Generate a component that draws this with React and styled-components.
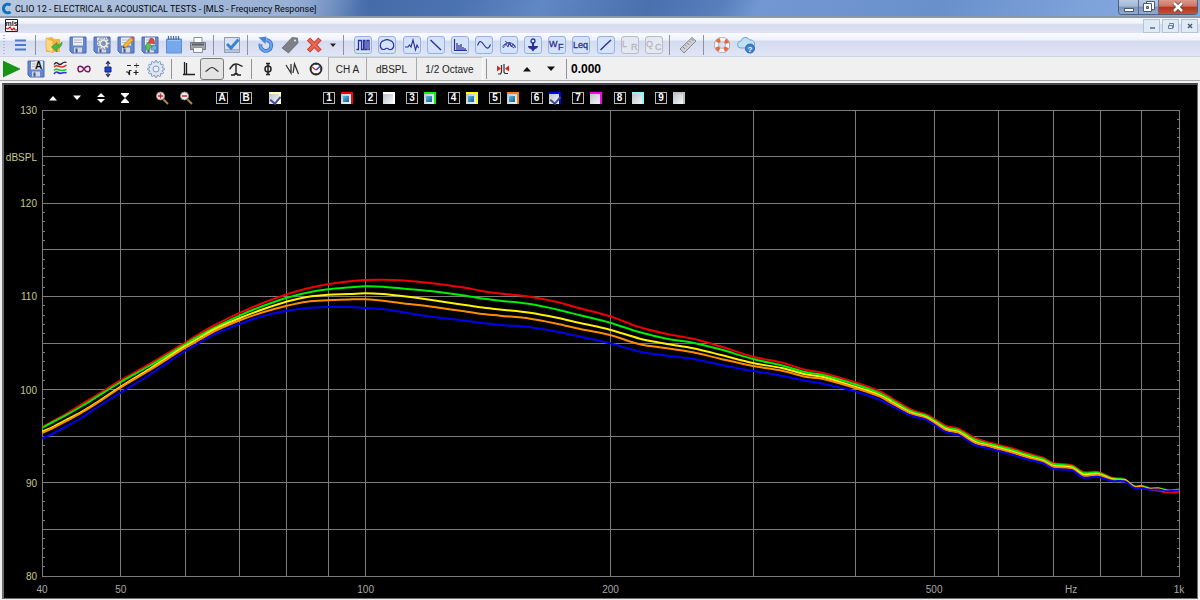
import React, { useLayoutEffect, useRef, useState } from 'react';
import styled, { createGlobalStyle, css } from 'styled-components';

const GlobalStyle = createGlobalStyle`
  * { box-sizing: border-box; }
  body { margin: 0; background: #f0f0f0; font-family: "Liberation Sans", Arial, sans-serif; font-size: 10px; }
  button, input { font: inherit; color: inherit; margin: 0; padding: 0; }
`;

const Window = styled.div`
  display: flex;
  flex-direction: column;
  min-height: 100vh;
`;

const TitleBar = styled.header`
  display: flex;
  align-items: flex-start;
  height: 18px;
  border-bottom: 2px solid #8d98ad;
  background:
    linear-gradient(90deg, rgba(205, 217, 235, 0.75) 0, rgba(190, 206, 230, 0.6) 290px, rgba(150, 175, 212, 0) 370px),
    linear-gradient(120deg, #7292c4 0, #5f83bb 26%, #456aa8 30%, #4c73b1 38%, #6088c4 45%, #4a70ae 54%, #5880bd 60%, #7397d2 63%, #6a90cc 78%, #7ea2da 90%, #86a8de 100%);
`;

const AppLogo = styled.svg`
  flex: none;
  margin: 2px 3px 0 0;
`;

const Title = styled.h1`
  flex: 1;
  margin: 0;
  font: 400 9px/18px Roboto, "Open Sans", sans-serif;
  color: #05080f;
  white-space: nowrap;
`;

const WindowControls = styled.div`
  display: flex;
  flex: none;
  margin-right: 2px;
  height: 15px;
  border: 1px solid #4d5f80;
  border-top: 0;
  border-radius: 0 0 4px 4px;
  overflow: hidden;
`;

const WindowButton = styled.button`
  display: grid;
  place-items: center;
  width: ${(p) => (p.$close ? 38 : 20)}px;
  border: 0;
  border-right: ${(p) => (p.$close ? 0 : '1px solid #5b6d8d')};
  background: ${(p) =>
    p.$close
      ? 'linear-gradient(#d99a8c 0, #cc7464 45%, #b03420 50%, #c9503c 100%)'
      : 'linear-gradient(#b9cae3 0, #a3b7d6 45%, #7b93ba 50%, #93abcf 100%)'};
`;

const MenuBar = styled.nav`
  display: flex;
  align-items: center;
  justify-content: space-between;
  height: 15px;
  padding: 0 2px 0 5px;
  background: linear-gradient(#f8fafe 0, #eef1f9 35%, #d5dcee 45%, #dde3f2 100%);
`;

const MdiControls = styled.div`
  display: flex;
  gap: 2px;
`;

const MdiButton = styled.button`
  display: grid;
  place-items: center;
  width: 17px;
  height: 14px;
  border: 1px solid #b4c3d8;
  background: #dfeaf7;
`;

const Toolbar = styled.div`
  display: flex;
  align-items: center;
  height: 24px;
  ${(p) =>
    p.$main
      ? css`
          background: linear-gradient(#fbfcff 0, #eff2fb 30%, #d4dbef 36%, #e1e6f6 100%);
          border-bottom: 1px solid #cdd3e2;
        `
      : css`
          background: #f0f0f0;
          border-bottom: 1px solid #a6a6a6;
        `}
`;

const Grip = styled.div`
  width: 2px;
  height: 20px;
  margin: 0 3px;
  background: repeating-linear-gradient(#b4bccf 0 1px, transparent 1px 3px);
`;

const Separator = styled.div`
  flex: none;
  width: ${(p) => (p.$wide ? 10 : 8)}px;
  height: 20px;
  padding-left: 3px;
  &::before {
    content: '';
    display: block;
    width: 1px;
    height: 100%;
    background: #8f9299;
  }
`;

const ToolButton = styled.button`
  flex: none;
  display: grid;
  place-items: center;
  width: ${(p) => (p.$narrow ? 14 : 24)}px;
  height: 22px;
  border: ${(p) => (p.$pressed ? '1px solid #7a7a7a' : '0')};
  border-radius: 3px;
  background: ${(p) => (p.$pressed ? '#e4e4e4' : 'transparent')};
`;

const ModuleGroup = styled.div`
  display: flex;
  justify-content: space-between;
  width: 316px;
  padding-left: 1px;
`;

const ModuleFrame = styled.span`
  display: grid;
  place-items: center;
  width: 18px;
  height: 18px;
  border: 1px solid ${(p) => (p.$off ? '#b9bdc6' : '#93b3e4')};
  border-radius: 3px;
  background: ${(p) => (p.$off ? '#e4e8f2' : '#d6e2f7')};
`;

const TextButton = styled.button`
  flex: none;
  width: ${(p) => p.$width}px;
  height: 23px;
  border: 0;
  border-left: 1px solid #a9a9a9;
  border-top: 1px solid #c4c4c4;
  border-right: ${(p) => (p.$last ? '1px solid #fff' : '0')};
  background: #eeeeee;
  color: #222;
  white-space: nowrap;
`;

const Readout = styled.output`
  font-size: 12px;
  font-weight: 700;
  color: #000;
`;

const ChartPanel = styled.main`
  flex: 1;
  display: flex;
  flex-direction: column;
  margin: 2px 2px 1px;
  border: 2px solid #6c6f72;
  border-top-color: #45474a;
  border-right-width: 1px;
  border-bottom-width: 1px;
  background: #000;
`;

const ChartTools = styled.div`
  display: flex;
  align-items: center;
  height: 25px;
  padding-left: 37px;
`;

const ToolSet = styled.div`
  display: flex;
  align-items: center;
  margin-right: ${(p) => p.$gap}px;
`;

const Channels = styled.div`
  display: flex;
  justify-content: space-between;
  width: 362px;
`;

const Channel = styled.label`
  display: flex;
  align-items: center;
  gap: 6px;
`;

const Badge = styled.span`
  display: grid;
  place-items: center;
  width: 12px;
  height: 12px;
  border: 1px solid #b8b8b8;
  color: #fff;
  font-size: 10px;
  font-weight: 700;
  line-height: 10px;
`;

const Swatch = styled.input`
  appearance: none;
  display: block;
  width: 12px;
  height: 12px;
  border: 0 solid ${(p) => p.$color};
  border-width: 2px 2px 0 0;
  background: linear-gradient(135deg, #c0c4c9, #f5f6f7);
  &::after {
    content: '';
    display: block;
    ${(p) =>
      p.$mark === 'fill' &&
      css`
        width: 6px;
        height: 6px;
        margin: 2px;
        background: linear-gradient(135deg, #58bde8, #135c94);
      `}
    ${(p) =>
      p.$mark === 'check' &&
      css`
        width: 5px;
        height: 8px;
        margin: 0 3px;
        border: solid #3c4f96;
        border-width: 0 2px 2px 0;
        transform: rotate(40deg);
      `}
  }
`;

const ChartArea = styled.div`
  position: relative;
  flex: 1;
  min-height: 200px;
`;

const ChartSvg = styled.svg`
  position: absolute;
  inset: 0;
  width: 100%;
  height: 100%;
  overflow: visible;
  font-size: 10px;
`;

/* ---------- icons ---------- */

const Icon = ({ children, size = 18, ...rest }) => (
  <svg width={size} height={size} viewBox="0 0 18 18" fill="none" aria-hidden="true" {...rest}>
    {children}
  </svg>
);

const Floppy = ({ children }) => (
  <Icon>
    <path d="M1 1h16v16H3l-2-2z" fill="#6488cf" stroke="#4a69b0" />
    <path d="M4 1.500h10v8H4z" fill="#eceef2" />
    <path d="M5 4h8M5 6.500h8" stroke="#b5bac6" />
    <path d="M5 11.500h8v5H5z" fill="#d3d7df" />
    <path d="M6.500 12.500h2v4h-2z" fill="#3e5596" />
    {children}
  </Icon>
);

const gearPath = (cx, cy, r, R, n) => {
  const pts = [];
  for (let i = 0; i < n; i++) {
    const a = (i / n) * Math.PI * 2;
    const w = Math.PI / n;
    [[-0.7, r], [-0.42, R], [0.42, R], [0.7, r]].forEach(([k, q]) =>
      pts.push(`${cx + q * Math.cos(a + k * w)},${cy + q * Math.sin(a + k * w)}`)
    );
  }
  return `M${pts.join('L')}Z`;
};

const mainIcons = {
  menu: (
    <Icon><path d="M4 4.500h11M4 9h11M4 13.500h11" stroke="#4c78c8" strokeWidth="2" /></Icon>
  ),
  open: (
    <Icon>
      <path d="M1 2l6-1 2 2h6v13H1z" fill="#f2b63c" />
      <path d="M1 2l7 3v12l-7-3z" fill="#fcd879" stroke="#e0a135" strokeWidth=".6" />
      <path d="M17 6c0 4-2 6-5 6.500V16l-5.500-5L12 6.500V9c2 0 4-1 5-3z" fill="#4fb548" stroke="#2f8f2e" strokeWidth=".6" />
    </Icon>
  ),
  save: <Floppy />,
  saveSettings: (
    <Floppy>
      <path d={gearPath(10.500, 7.500, 4.500, 6.300, 9)} fill="#e6e8ec" stroke="#8a8e96" strokeWidth=".8" />
      <circle cx="10.500" cy="7.500" r="2" fill="#7d95c8" stroke="#8a8e96" />
    </Floppy>
  ),
  saveEdit: (
    <Floppy>
      <path d="M6 12l1-3.500L14 1.500l2.500 2.500-7 7z" fill="#f7b733" stroke="#a86f18" strokeWidth=".7" />
      <path d="M14 1.500l2.500 2.500 1-1.500L15.500.500z" fill="#d95b4d" />
      <path d="M6 12l.6-2 1.400 1.400z" fill="#333" />
    </Floppy>
  ),
  saveChart: (
    <Floppy>
      <path d="M9.500 2a4 4 0 014 4v2L7 7z" fill="#e2473d" stroke="#8d3730" strokeWidth=".5" />
      <path d="M7 6.500l4 3.500-4 5a5 5 0 010-8.500z" fill="#5fbe55" stroke="#337c31" strokeWidth=".5" />
      <path d="M12 9l4 1.500-1 4-5-1z" fill="#6fb3ee" stroke="#33669c" strokeWidth=".5" />
    </Floppy>
  ),
  notepad: (
    <Icon>
      <path d="M1.500 3h15v14h-15z" fill="#76a9ec" stroke="#5c8ed6" />
      <path d="M3 4.500h12" stroke="#9cc3f5" />
      <path d="M3.500 0v4M6 0v4M8.500 0v4M11 0v4M13.500 0v4" stroke="#4a6595" strokeWidth="1.200" />
    </Icon>
  ),
  print: (
    <Icon>
      <path d="M5 1.500h8v6H5z" fill="#fff" stroke="#8b8f96" />
      <path d="M1.500 6.500h15v7h-15z" fill="#a2a6ad" stroke="#73777e" />
      <path d="M3 8.500h12" stroke="#5c6066" strokeWidth="2" />
      <path d="M4.500 11.500h9v5h-9z" fill="#f4f5f7" stroke="#8b8f96" />
    </Icon>
  ),
  check: (
    <Icon>
      <path d="M1.500 1.500h15v15h-15z" fill="#d8e2f4" stroke="#9098a8" />
      <path d="M1.500 13.500h15v3h-15z" fill="#b9c4da" stroke="#9098a8" strokeWidth=".6" />
      <path d="M4 8l4 4 7.500-8.500" stroke="#3a83d6" strokeWidth="3" />
    </Icon>
  ),
  undo: (
    <Icon>
      <path d="M3.500 8a5.500 5.500 0 1 0 6-4" stroke="#3f76cc" strokeWidth="3.800" />
      <path d="M3.500 8a5.500 5.500 0 1 0 6-4" stroke="#6ea1ec" strokeWidth="2" />
      <path d="M1.500 1.500l8-1-1 7.500z" fill="#4a86dc" />
    </Icon>
  ),
  tag: (
    <Icon>
      <path d="M1 12L11 1.500l5.500.5.500 5L7.500 17z" fill="#7d8086" stroke="#64676d" strokeWidth=".7" />
      <circle cx="14" cy="4.500" r="1" fill="#f0f2f6" />
    </Icon>
  ),
  remove: (
    <Icon>
      <path d="M3.500 3l11.500 12M15 3L3.500 15" stroke="#c83d2b" strokeWidth="4.600" />
      <path d="M4 3.500l10.500 11M14.500 3.500L4 14.500" stroke="#ea6451" strokeWidth="2.600" />
    </Icon>
  ),
  ruler: (
    <Icon>
      <path d="M1 13L13 1.500 17 5 5 17z" fill="#cfd1d5" stroke="#85888e" />
      <path d="M4 11l2 2M6.300 9l1.500 1.500M8.300 7l2 2M10.500 5l1.500 1.500M12.500 3l2 2" stroke="#85888e" />
    </Icon>
  ),
  help: (
    <Icon>
      <circle cx="9" cy="9" r="5.500" stroke="#8f949e" strokeWidth="5" />
      <circle cx="9" cy="9" r="5.500" stroke="#f3f4f6" strokeWidth="3.800" />
      <circle cx="9" cy="9" r="5.500" stroke="#e36a3d" strokeWidth="3.800" strokeDasharray="3.600 5.040" strokeDashoffset="-2.500" />
    </Icon>
  ),
  cloud: (
    <Icon>
      <path d="M4 12a3.500 3.500 0 010-7 4.500 4.500 0 018.500-1A4 4 0 0114.500 12z" fill="#bfe0f5" stroke="#6ba5d3" />
      <circle cx="13" cy="12.500" r="4.500" fill="#3f83cf" stroke="#2b66ab" />
      <text x="13" y="15.500" textAnchor="middle" fontSize="8" fontWeight="700" fill="#fff">?</text>
    </Icon>
  ),
};

const Caret = ({ up, color = '#111' }) => (
  <svg width="10" height="6" viewBox="0 0 10 6" aria-hidden="true">
    <path d={up ? 'M1 5.500L5 1l4 4.500z' : 'M1 .5L5 5 9 .5z'} fill={color} />
  </svg>
);

const Line = ({ d, width = 1.1 }) => (
  <svg width="16" height="16" viewBox="0 0 16 16" fill="none" stroke="#2a2f9c" strokeWidth={width} aria-hidden="true">
    <path d={d} />
  </svg>
);

const Letters = ({ a, b, color }) => (
  <svg width="16" height="16" viewBox="0 0 16 16" fill={color} stroke={color} strokeWidth=".3" fontSize="9" aria-hidden="true">
    <text x="0" y="10">{a}</text>
    <text x="9" y="13">{b}</text>
  </svg>
);

const modules = [
  ['MLS', <Line d="M1.500 12.500h2v-9h3v9h2v-9h1.500v9h2v-9h2v9H15" width={1.3} />],
  ['Polar', <Line d="M5.500 12.500H3.500A5 5 0 0 1 5 3.500a6 6 0 0 1 6 0 5 5 0 0 1 1.500 9h-2.500q-2-2.500-4.500 0z" />],
  ['Scope', <Line d="M1 10h3l1.500-2 1.500 2L9 3l2.500 10 1.500-5 1.500 3" />],
  ['Waterfall', <Line d="M2.500 3l10.500 10" width={1.4} />],
  ['FFT', <Line d="M2.500 2v11.500H15M5 13V6M7 13V8M9 13V7M11 13v-3M13 13v-2" width={1.2} />],
  ['Sinusoidal', <Line d="M1.500 8.500c2-6 4-4.500 6.500-.5s4.500 4.500 6.500-.5" />],
  ['Multimeter', <Line d="M1.500 9.500c3-5 10-5 13 0M2 11l3-4 2 3 1.500-5 2 5 1.500-3 2.500 4M4 4l9 7" width={0.9} />],
  ['Linearity', (
    <svg width="16" height="16" viewBox="0 0 16 16" fill="#2a2f9c" aria-hidden="true">
      <circle cx="8" cy="4" r="2" fill="none" stroke="#2a2f9c" strokeWidth="1.300" />
      <path d="M7 6h2v3h4c0 2-2 3-3 3l-2 2.500L6 12c-1 0-3-1-3-3h4z" />
    </svg>
  )],
  ['Wow and flutter', <Letters a="W" b="F" color="#2a2f9c" />],
  ['Leq', (
    <svg width="16" height="16" viewBox="0 0 16 16" fill="#2a2f9c" stroke="#2a2f9c" strokeWidth=".3" aria-hidden="true">
      <text x="0" y="11" fontSize="9">Leq</text>
    </svg>
  )],
  ['Level', <Line d="M2.500 13L7 8.500 13 3" width={1.4} />],
  ['Loudspeaker ratio', <Letters a="L" b="R" color="#b3b7c0" />, true],
  ['Quality control', <Letters a="Q" b="C" color="#b3b7c0" />, true],
];

const mlsIcons = {
  play: (
    <Icon><path d="M0 1l17 8-17 8z" fill="#149614" stroke="#0b7d0b" strokeWidth=".6" /></Icon>
  ),
  autosave: (
    <Floppy>
      <path d="M8 1h8v8H8z" fill="#dfe3ec" />
      <text x="8" y="9" fontSize="10" fontWeight="700" fill="#111">A</text>
    </Floppy>
  ),
  overlays: (
    <Icon strokeWidth="1.300">
      <path d="M3 4.500q2-3 4-1t4 0 4.500-1" stroke="#222" />
      <path d="M3 7q2-2 4-1t4 1 4.500-2" stroke="#e03030" strokeWidth="1.600" />
      <path d="M3 10.500q2-2 4-1t4 1 4.500-1" stroke="#25c525" strokeWidth="1.600" />
      <path d="M3 14q2-3 4-1.500t4 .5 4.500 0" stroke="#2a2ae0" strokeWidth="1.600" />
    </Icon>
  ),
  loop: (
    <Icon><path d="M9 9C7 5.500 3 5 3 9s4 3.500 6 0 6-4 6 0-4 3.500-6 0z" stroke="#7a1560" strokeWidth="1.500" /></Icon>
  ),
  scale: (
    <Icon>
      <path d="M6 7h6v5H6z" fill="#1b47d8" stroke="#11207c" />
      <path d="M9 1.500v5M9 12.500v4M7 4l2-2.500L11 4M7 14l2 2.500 2-2.500" stroke="#222a60" strokeWidth="1.200" />
    </Icon>
  ),
  math: (
    <Icon><path d="M4 5.500h4M11 5.500h5M13.500 3.500v1M13.500 6.500v1M10.500 12.500h5M13 10v5M3 12h2l1.500 3V10.500h2" stroke="#222" strokeWidth="1.200" /></Icon>
  ),
  settings: (
    <Icon stroke="#7d9ac6">
      <path d={gearPath(9, 9, 6.500, 8.300, 12)} fill="#dfe7f3" />
      <circle cx="9" cy="9" r="3" fill="#f0f0f0" />
    </Icon>
  ),
  impulse: <Icon><path d="M5.500 2v13M7.500 3v11.500H16M4 14.500h4" stroke="#222" strokeWidth="1.300" /></Icon>,
  response: <Icon><path d="M2.500 11.500c2 0 3-4 6.500-4s4.500 4 6.500 4" stroke="#222" strokeWidth="1.200" /></Icon>,
  stepped: <Icon><path d="M2.500 9c2-1 2-5 6.500-5s4.500 3 6.500 2M9 5v10M4 15h4M10 15h4M6.500 15l2.500-2 2.500 2" stroke="#222" strokeWidth="1.400" /></Icon>,
  phase: <Icon><path d="M9 3v12M7 3.500h4M7 14.500h4" stroke="#222" strokeWidth="1.500" /><ellipse cx="9" cy="9" rx="3" ry="3" stroke="#222" strokeWidth="1.500" /></Icon>,
  groupDelay: <Icon><path d="M3 5l5 8V4M10 13l1.500-9 4 10" stroke="#333" strokeWidth="1.300" /></Icon>,
  clock: (
    <Icon>
      <circle cx="9" cy="9" r="5.500" fill="#fff" stroke="#2b2b2b" strokeWidth="1.800" />
      <path d="M9 3v2M9 13v2M3 9h2M13 9h2" stroke="#222" />
      <path d="M5 7l4 3" stroke="#e03030" strokeWidth="1.400" />
      <path d="M9 10l4-3.500" stroke="#3030e0" strokeWidth="1.400" />
    </Icon>
  ),
  smoothing: (
    <Icon>
      <path d="M4 14h2.500l1-2V5M10 4v8l1 1.500h3" stroke="#333" strokeWidth="1.200" />
      <path d="M3 5.500l4 3-4 3zM15 5.500l-4 3 4 3z" fill="#e02020" />
    </Icon>
  ),
};

const Magnifier = ({ plus }) => (
  <svg width="14" height="14" viewBox="0 0 14 14" fill="none" aria-hidden="true">
    <path d="M8.500 8.500L13 13" stroke="#a88b4c" strokeWidth="2" />
    <circle cx="5.500" cy="5" r="4" fill="#f4eeee" stroke="#8b8b8b" />
    <path d={plus ? 'M3 5h5M5.500 2.500v5' : 'M3 5h5'} stroke="#d3242a" strokeWidth="1.500" />
  </svg>
);

const Arrows = ({ d }) => (
  <svg width="10" height="12" viewBox="0 0 10 12" aria-hidden="true">
    <path d={d} fill="#fff" />
  </svg>
);

/* ---------- chart ---------- */

const MIN_HZ = 40;
const MAX_HZ = 1000;
const MIN_DB = 80;
const MAX_DB = 130;

const traceColors = ['#f00000', '#00ee00', '#fff200', '#ff8c00', '#0000f0'];

/* Each row: horizontal position, then the height of the five traces. */
const traces = [
  [42, 427.5, 428, 431.5, 433, 438.5],
  [52, 421.5, 422.5, 427.3, 428.5, 434],
  [67, 413.3, 414.7, 419.5, 420.7, 426],
  [82, 404, 406, 411.5, 412.5, 417.5],
  [97, 395, 396.7, 402.3, 403.2, 407.5],
  [120, 380.7, 382.5, 387, 388, 393],
  [150, 363.7, 365.5, 368.5, 370, 374.5],
  [185, 342.7, 344.3, 346.2, 348, 351],
  [200, 333.3, 335.3, 337.5, 339.5, 342.3],
  [215, 325, 327.3, 329, 331, 334],
  [240, 312.7, 315.3, 318, 320.3, 323.7],
  [263, 303, 306, 309.3, 312.3, 316],
  [287, 294.3, 297.7, 301.5, 305.7, 310.7],
  [307, 288.5, 292.7, 297, 301.7, 308],
  [328, 284.3, 289.3, 294.7, 300.3, 307],
  [350, 281.3, 287.3, 294, 299.4, 307.1],
  [365, 280, 286.2, 293.2, 299.3, 308],
  [383, 279.7, 286.7, 294, 300.7, 309.3],
  [400, 280.3, 288.3, 295.8, 303, 311.7],
  [430, 283, 291, 299.8, 306.5, 316.5],
  [467, 288, 296, 305.3, 311.7, 321],
  [480, 290.7, 298.2, 307.3, 313.7, 322.7],
  [500, 293.5, 300.7, 309.5, 315.7, 325],
  [530, 296.7, 304, 312.7, 318.7, 327.2],
  [557, 302, 309.5, 317.7, 323.7, 331.7],
  [580, 308.3, 315.3, 323, 329, 336.7],
  [610, 316.3, 322.7, 329.7, 335, 343.3],
  [640, 327.3, 332.3, 338.7, 344.3, 351.7],
  [667, 334, 338.7, 344, 348.3, 355.7],
  [693, 338.7, 342.7, 348.3, 352.3, 359],
  [720, 346.3, 349.3, 354.7, 358.7, 364.7],
  [753, 356.7, 359, 363, 366, 371],
  [783, 363, 365.7, 368.3, 371, 376],
  [805, 369.7, 372, 374.3, 376.7, 380.7],
  [823, 373, 375, 377, 379, 383.7],
  [855, 382.3, 384.3, 386.7, 388, 391.3],
  [880, 391.5, 393.3, 395.3, 396.7, 400],
  [892, 398.3, 400, 402, 403.5, 406],
  [911, 409.5, 411, 412.7, 413.7, 415.5],
  [925, 414, 415.3, 416.7, 417.7, 419.3],
  [934, 418.5, 420, 421.7, 422.7, 424.5],
  [946, 426, 427.5, 429, 430.2, 432.2],
  [958, 428.3, 429.8, 431.7, 432.7, 434.7],
  [975, 438, 439.7, 441.7, 443, 445],
  [990, 442.7, 444, 445.7, 446.7, 448.7],
  [1010, 447.7, 449.2, 451, 452, 454],
  [1027, 453, 454.5, 456.3, 457.3, 459.3],
  [1043, 457.7, 459, 460.7, 461.7, 463.2],
  [1053, 463, 464, 465.7, 466.7, 468.7],
  [1072, 465.3, 466.3, 467.7, 468.7, 470.3],
  [1083, 472, 473, 474.5, 475.7, 477.5],
  [1098, 472, 472.7, 473.9, 475, 476.7],
  [1112, 477.7, 478.5, 479.3, 480, 481],
  [1125, 479.3, 479.8, 480.3, 480.7, 481.5],
  [1134, 487, 486.3, 486.7, 487, 488],
  [1142, 487, 486, 486.7, 487, 488],
  [1150, 489.7, 488.5, 489, 489.3, 489.7],
  [1158, 490.5, 488, 489, 489.3, 489.5],
  [1168, 492.5, 490.5, 491, 491.2, 491.3],
  [1179, 492.3, 489.5, 490.3, 490.5, 490.5],
];

/* Cubic path through the samples, with slopes taken from each sample's neighbours. */
function smoothPath(points) {
  const last = points.length - 1;
  const slope = (i) => {
    const a = points[Math.max(i - 1, 0)];
    const b = points[Math.min(i + 1, last)];
    return (b[1] - a[1]) / (b[0] - a[0]);
  };
  let d = `M${points[0].join(' ')}`;
  for (let i = 0; i < last; i++) {
    const [x0, y0] = points[i];
    const [x1, y1] = points[i + 1];
    const h = (x1 - x0) / 3;
    d += `C${x0 + h} ${y0 + slope(i) * h} ${x1 - h} ${y1 - slope(i + 1) * h} ${x1} ${y1}`;
  }
  return d;
}

function useSize(ref) {
  const [size, setSize] = useState({ width: 1193, height: 487 });
  useLayoutEffect(() => {
    const update = () => {
      const box = ref.current.getBoundingClientRect();
      setSize({ width: box.width, height: box.height });
    };
    update();
    const observer = new ResizeObserver(update);
    observer.observe(ref.current);
    return () => observer.disconnect();
  }, [ref]);
  return size;
}

function Chart() {
  const ref = useRef(null);
  const { width, height } = useSize(ref);
  const left = 38;
  const top = 0;
  const right = width - 18;
  const bottom = height - 22;
  const x = (hz) => left + (Math.log(hz / MIN_HZ) / Math.log(MAX_HZ / MIN_HZ)) * (right - left);
  const y = (db) => top + ((MAX_DB - db) / (MAX_DB - MIN_DB)) * (bottom - top);
  const crisp = (v) => Math.floor(v) + 0.5;

  const verticals = [40, 50, 60, 70, 80, 90, 100, 200, 300, 400, 500, 600, 700, 800, 900, 1000];
  const levels = Array.from({ length: 11 }, (_, i) => MIN_DB + i * 5);
  const ticks = Array.from({ length: 51 }, (_, i) => MIN_DB + i);

  return (
    <ChartArea ref={ref}>
      <ChartSvg role="img" aria-label="Frequency response, dBSPL against Hz">
        <g stroke="#7d7d7d" strokeWidth="1">
          {verticals.map((hz) => (
            <line key={hz} x1={crisp(x(hz))} x2={crisp(x(hz))} y1={crisp(top)} y2={crisp(bottom)} />
          ))}
          {levels.map((db) => (
            <line key={db} x1={left} x2={right} y1={crisp(y(db))} y2={crisp(y(db))} />
          ))}
          {ticks.map((db) => (
            <path key={db} d={`M${left} ${crisp(y(db))}h3M${right - 2} ${crisp(y(db))}h3`} />
          ))}
        </g>
        <svg
          x={left}
          y={top}
          width={Math.max(right - left + 1, 1)}
          height={Math.max(bottom - top, 1)}
          viewBox="42 110 1138 466"
          preserveAspectRatio="none"
        >
          {traceColors.map((color, i) => (
            <path
              key={color}
              d={smoothPath(traces.map((row) => [row[0], row[i + 1]]))}
              fill="none"
              stroke={color}
              strokeWidth="2"
              strokeLinejoin="round"
              vectorEffect="non-scaling-stroke"
            />
          ))}
        </svg>
        <g fill="#c9c98f" textAnchor="end">
          {[130, 120, 110, 100, 90, 80].map((db) => (
            <text key={db} x={left - 5} y={y(db) + 4}>{db}</text>
          ))}
          <text x={left - 5} y={y(125) + 4}>dBSPL</text>
        </g>
        <g fill="#a8a8a8" textAnchor="middle">
          {[[40, '40'], [50, '50'], [100, '100'], [200, '200'], [500, '500'], [737, 'Hz'], [1000, '1k']].map(([hz, text]) => (
            <text key={text} x={x(hz)} y={bottom + 17}>{text}</text>
          ))}
        </g>
      </ChartSvg>
    </ChartArea>
  );
}

const channels = [
  ['#ff0000', 'fill'],
  ['#ffffff', ''],
  ['#00ff00', 'fill'],
  ['#ffff00', 'fill'],
  ['#ff8000', 'fill'],
  ['#0000ff', 'check'],
  ['#ff00ff', ''],
  ['#80ffff', ''],
  ['#c0c0c0', ''],
];

const Tools = ({ icons, names }) =>
  names.map((name) => (
    <ToolButton key={name} type="button" aria-label={name} $pressed={name === 'response'}>
      {icons[name]}
    </ToolButton>
  ));

export default function App() {
  return (
    <Window>
      <GlobalStyle />
      <TitleBar>
        <AppLogo width="12" height="13" viewBox="0 0 12 13" fill="none" aria-hidden="true">
          <path d="M10.500 3.200A4.300 4.300 0 1 0 10.500 9.800" stroke="#0d71b9" strokeWidth="3" />
        </AppLogo>
        <Title>CLIO 12 - ELECTRICAL &amp; ACOUSTICAL TESTS - [MLS - Frequency Response]</Title>
        <WindowControls>
          <WindowButton type="button" aria-label="Minimize">
            <svg width="12" height="12" viewBox="0 0 12 12"><path d="M1.500 7.500h9v3h-9z" fill="#fff" stroke="#4b5a75" /></svg>
          </WindowButton>
          <WindowButton type="button" aria-label="Restore">
            <svg width="12" height="12" viewBox="0 0 12 12" fill="#fff" stroke="#4b5a75">
              <path d="M3.500.5h8v8h-8z" />
              <path d="M.5 2.500h8v8h-8z" />
              <path d="M3.500 5.500h2v2h-2z" fill="#8ba0c2" />
            </svg>
          </WindowButton>
          <WindowButton type="button" aria-label="Close" $close>
            <svg width="12" height="12" viewBox="0 0 12 12" fill="none">
              <path d="M2 2l8 8M10 2l-8 8" stroke="#5e3a38" strokeWidth="4" />
              <path d="M2 2l8 8M10 2l-8 8" stroke="#fff" strokeWidth="2.500" />
            </svg>
          </WindowButton>
        </WindowControls>
      </TitleBar>

      <MenuBar>
        <svg width="13" height="13" viewBox="0 0 13 13" aria-hidden="true">
          <path d="M.5.5h12v12H.5z" fill="#fff" stroke="#222" />
          <text x="6.500" y="6.500" textAnchor="middle" fontSize="7" fontWeight="700" fill="#111">mls</text>
          <path d="M1 9l2 1 2-2 2 3 2-2 1 2 2 0" fill="none" stroke="#d01818" strokeWidth="1.200" />
        </svg>
        <MdiControls>
          <MdiButton type="button" aria-label="Minimize document">
            <svg width="8" height="8" viewBox="0 0 8 8"><path d="M2 6h5" stroke="#57697f" strokeWidth="1.500" /></svg>
          </MdiButton>
          <MdiButton type="button" aria-label="Restore document">
            <svg width="8" height="8" viewBox="0 0 8 8" fill="none" stroke="#6b7c91"><path d="M2.500 2.500v-1h4v4h-1M1.500 3.500h4v3h-4z" /></svg>
          </MdiButton>
          <MdiButton type="button" aria-label="Close document">
            <svg width="8" height="8" viewBox="0 0 8 8"><path d="M2 2l4 4M6 2L2 6" stroke="#4c5d73" strokeWidth="1.500" /></svg>
          </MdiButton>
        </MdiControls>
      </MenuBar>

      <Toolbar $main role="toolbar" aria-label="Main">
        <Grip />
        <Tools icons={mainIcons} names={['menu']} />
        <Separator $wide />
        <Tools icons={mainIcons} names={['open', 'save', 'saveSettings', 'saveEdit', 'saveChart', 'notepad', 'print']} />
        <Separator $wide />
        <Tools icons={mainIcons} names={['check']} />
        <Separator $wide />
        <Tools icons={mainIcons} names={['undo', 'tag', 'remove']} />
        <ToolButton type="button" aria-label="More" $narrow>
          <svg width="6" height="4" viewBox="0 0 6 4"><path d="M0 .5h6L3 4z" fill="#222" /></svg>
        </ToolButton>
        <Separator $wide />
        <ModuleGroup>
          {modules.map(([name, icon, off]) => (
            <ToolButton key={name} type="button" aria-label={name} disabled={off}>
              <ModuleFrame $off={off}>{icon}</ModuleFrame>
            </ToolButton>
          ))}
        </ModuleGroup>
        <Separator $wide />
        <Tools icons={mainIcons} names={['ruler']} />
        <Separator $wide />
        <Tools icons={mainIcons} names={['help', 'cloud']} />
      </Toolbar>

      <Toolbar role="toolbar" aria-label="MLS">
        <Tools icons={mlsIcons} names={['play', 'autosave', 'overlays', 'loop', 'scale', 'math', 'settings']} />
        <Separator />
        <Tools icons={mlsIcons} names={['impulse', 'response', 'stepped']} />
        <Separator />
        <Tools icons={mlsIcons} names={['phase', 'groupDelay', 'clock']} />
        <TextButton type="button" $width={38}>CH A</TextButton>
        <TextButton type="button" $width={50}>dBSPL</TextButton>
        <TextButton type="button" $width={67} $last>1/2 Octave</TextButton>
        <Separator />
        <Tools icons={mlsIcons} names={['smoothing']} />
        <ToolButton type="button" aria-label="Shift up"><Caret up /></ToolButton>
        <ToolButton type="button" aria-label="Shift down"><Caret /></ToolButton>
        <Separator />
        <Readout>0.000</Readout>
      </Toolbar>

      <ChartPanel>
        <ChartTools>
          <ToolSet $gap={13}>
            <ToolButton type="button" aria-label="Move up"><Caret up color="#fff" /></ToolButton>
            <ToolButton type="button" aria-label="Move down"><Caret color="#fff" /></ToolButton>
            <ToolButton type="button" aria-label="Expand"><Arrows d="M1 5l4-4 4 4zM1 7l4 4 4-4z" /></ToolButton>
            <ToolButton type="button" aria-label="Compress"><Arrows d="M1 1h8v1L5 6 1 2zM1 11h8v-1L5 6l-4 4z" /></ToolButton>
          </ToolSet>
          <ToolSet $gap={12}>
            <ToolButton type="button" aria-label="Zoom in"><Magnifier plus /></ToolButton>
            <ToolButton type="button" aria-label="Zoom out"><Magnifier /></ToolButton>
          </ToolSet>
          <ToolSet $gap={11}>
            <ToolButton type="button"><Badge>A</Badge></ToolButton>
            <ToolButton type="button"><Badge>B</Badge></ToolButton>
          </ToolSet>
          <ToolSet $gap={42}>
            <Swatch type="checkbox" aria-label="Current curve" defaultChecked $color="#ffffb4" $mark="check" />
          </ToolSet>
          <Channels>
            {channels.map(([color, mark], i) => (
              <Channel key={color}>
                <Badge>{i + 1}</Badge>
                <Swatch type="checkbox" defaultChecked={mark !== ''} $color={color} $mark={mark} />
              </Channel>
            ))}
          </Channels>
        </ChartTools>
        <Chart />
      </ChartPanel>
    </Window>
  );
}
